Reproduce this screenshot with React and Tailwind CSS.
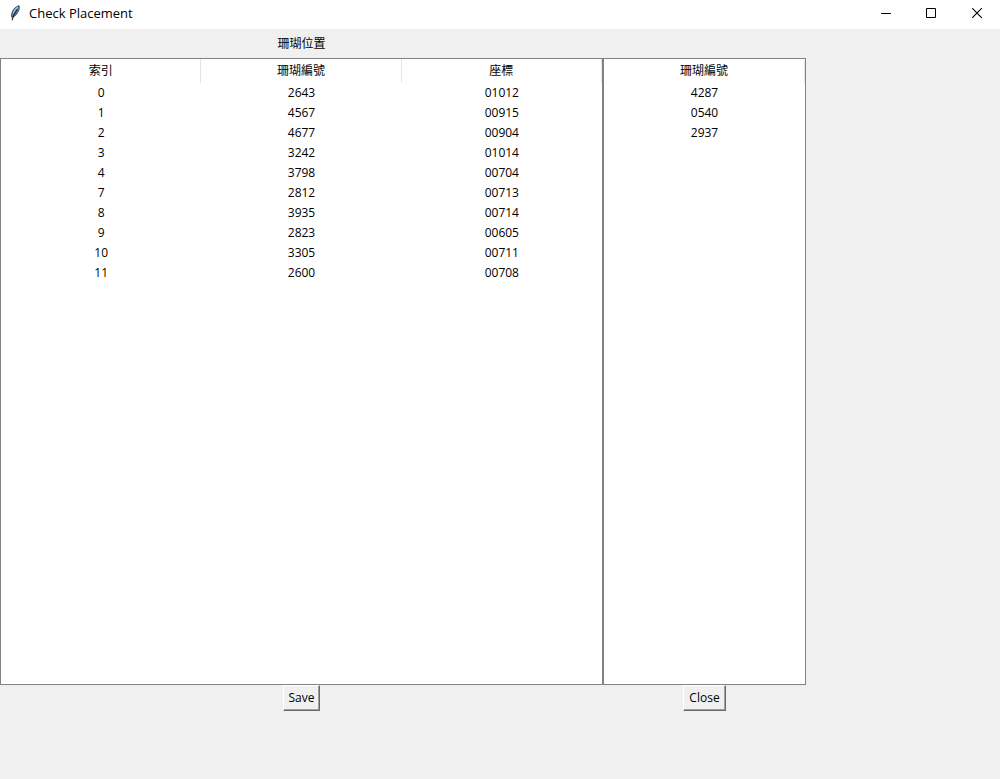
import React from "react";

const placements = [
  ["0", "2643", "01012"],
  ["1", "4567", "00915"],
  ["2", "4677", "00904"],
  ["3", "3242", "01014"],
  ["4", "3798", "00704"],
  ["7", "2812", "00713"],
  ["8", "3935", "00714"],
  ["9", "2823", "00605"],
  ["10", "3305", "00711"],
  ["11", "2600", "00708"],
];

const unplaced = [["4287"], ["0540"], ["2937"]];

function FeatherIcon() {
  return (
    <svg width="12" height="16" viewBox="0 0 12 16" aria-hidden="true">
      <path d="M10 0.6C7 1.4 4.4 4 3.2 7 2.5 9 2.3 11 2.8 12.4 5 11.8 7 10.2 8.2 8.4L7.8 8.2 9.2 6.8C10.2 4.8 10.8 2.4 10 0.6Z" fill="#5580ad" stroke="#1c2836" strokeWidth="0.7" />
      <path d="M9 2C6.6 3.4 5 5.6 4.2 8.4" fill="none" stroke="#a9c9e8" strokeWidth="1.3" />
      <path d="M8.2 4.4C6 7.4 4.2 10.8 3.2 15.2" fill="none" stroke="#0c1118" strokeWidth="1" />
    </svg>
  );
}

function TitleBar() {
  return (
    <header className="flex h-[29px] items-center justify-between bg-white">
      <div className="flex h-full items-center gap-2 pb-1 pl-[9px]">
        <FeatherIcon />
        <h1 className="text-[13px] leading-4">Check Placement</h1>
      </div>
      <div className="flex h-full pb-0.5">
        <button type="button" aria-label="Minimize" className="flex w-[46px] items-center justify-center">
          <svg width="11" height="11" viewBox="0 0 11 11" fill="none" stroke="#000">
            <path d="M0 5.5H10" />
          </svg>
        </button>
        <button type="button" aria-label="Maximize" className="flex w-[45px] items-center justify-center">
          <svg width="11" height="11" viewBox="0 0 11 11" fill="none" stroke="#000">
            <path d="M0.5 0.5H9.5V9.5H0.5Z" />
          </svg>
        </button>
        <button type="button" aria-label="Close window" className="flex w-[46px] items-center justify-center">
          <svg width="11" height="11" viewBox="0 0 11 11" fill="none" stroke="#000" strokeWidth="1.1">
            <path d="M0.2 0.2L9.8 9.8M9.8 0.2L0.2 9.8" />
          </svg>
        </button>
      </div>
    </header>
  );
}

function TreeTable({ label, columns, rows }) {
  return (
    <div className="border border-[#828282] bg-white">
      <table aria-label={label} className="w-full table-fixed border-separate border-spacing-0 text-center">
        <thead>
          <tr className="h-6">
            {columns.map((column) => (
              <th key={column} scope="col" className="border-r border-[#e5e5e5] p-0 leading-5 font-normal">
                {column}
              </th>
            ))}
          </tr>
        </thead>
        <tbody>
          {rows.map((row) => (
            <tr key={row[0]} className="h-5">
              {row.map((cell, i) => (
                <td key={i} className="p-0 leading-5">{cell}</td>
              ))}
            </tr>
          ))}
        </tbody>
      </table>
    </div>
  );
}

function TkButton({ children }) {
  return (
    <button
      type="button"
      className="h-[26px] border border-t-white border-r-[#696969] border-b-[#696969] border-l-white bg-[#f0f0f0] px-[5px] leading-5 shadow-[inset_-1px_-1px_0_#a0a0a0]"
    >
      {children}
    </button>
  );
}

export default function App() {
  return (
    <div className="flex min-h-screen flex-col bg-[#f0f0f0] font-['Open_Sans','Noto_Sans_CJK_TC',sans-serif] text-xs text-black">
      <TitleBar />
      <main className="grid flex-1 grid-cols-[603fr_203fr_194fr] grid-rows-[29px_1fr_26px] pb-[68px]">
        <h2 className="col-start-1 self-center text-center leading-5">珊瑚位置</h2>
        <div className="col-start-1 row-start-2 grid">
          <TreeTable label="珊瑚位置" columns={["索引", "珊瑚編號", "座標"]} rows={placements} />
        </div>
        <div className="col-start-2 row-start-2 grid">
          <TreeTable label="珊瑚編號" columns={["珊瑚編號"]} rows={unplaced} />
        </div>
        <div className="col-start-1 row-start-3 flex justify-center">
          <TkButton>Save</TkButton>
        </div>
        <div className="col-start-2 row-start-3 flex justify-center">
          <TkButton>Close</TkButton>
        </div>
      </main>
    </div>
  );
}
